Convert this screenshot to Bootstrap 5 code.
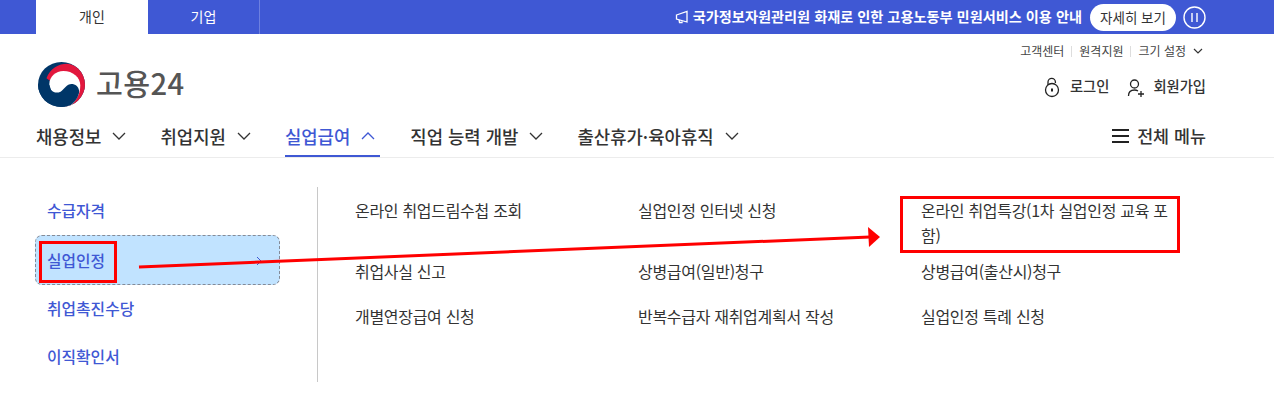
<!DOCTYPE html>
<html lang="ko">
<head>
<meta charset="utf-8">
<title>고용24</title>
<link href="https://cdn.jsdelivr.net/npm/bootstrap@5.3.0/dist/css/bootstrap.min.css" rel="stylesheet">
<style>
html,body{height:407px;overflow:hidden}
body{font-family:"Noto Sans CJK KR","Noto Sans",sans-serif;color:#333;background:#fff;position:relative}
a{color:inherit;text-decoration:none}
.topbar{height:34px;background:#3f58d4;color:#fff}
.toptab{height:34px;font-size:14px;line-height:32px;text-align:center;width:112px}
.tab-on{background:#fff;color:#333;margin-left:36px}
.tab-off{border-right:1px solid #6d80e0}
.notice{font-size:14.2px;font-weight:700;padding-right:68px;height:34px}
.detail-btn{background:#fff;color:#333;border-radius:14px;height:27px;line-height:26px;font-size:13.5px;width:86px;text-align:center;font-weight:400}
.pause-btn{width:23px;height:23px;margin-left:3px}
.headbox{height:124px;border-bottom:1px solid #ececec;padding:0 68px 0 36px;overflow:hidden}
.util{font-size:12px;height:14px;margin-top:10px;color:#444;line-height:14px;padding-right:3px;gap:7px}
.util-sep{width:1px;height:11px;background:#ddd}
.logo-row{height:47px;margin-top:3px}
.logo-mark{margin-left:2px}
.logo-text{font-size:29.2px;font-weight:500;color:#555;line-height:40px;letter-spacing:.4px;padding-bottom:6px;margin-left:3px}
.auth{font-size:14.3px;font-weight:500;color:#333;margin-top:14px;line-height:21px}
.auth-first{margin-right:18px}
.mainnav{height:40px;font-size:17.8px;font-weight:500;color:#333;margin-top:10px}
.navitem{height:40px;line-height:36px}
.navitem.is-open{color:#3f58d4;border-bottom:3px solid #3f58d4}
.nav-chev{margin-left:11px}
.nav-next{margin-left:34px}
.nav-after-open{margin-left:30px}
.nav-all{font-size:17.4px}
.menuwrap{padding:29px 0 0 35px}
.sidecol{width:245px}
.sideitem{height:48px;font-size:15.8px;font-weight:500;color:#3f58d4;padding-left:12px;line-height:48px}
.sideitem.is-active{height:50px;background:#c1e3ff;border:1px dashed #848b98;border-radius:7px;padding-left:11px;line-height:50px}
.divider{width:1px;height:195px;background:#c8c8c8;margin-left:37px}
.subgrid{display:grid;grid-template-columns:283px 283px 250px;grid-template-rows:61px 45px 45px;margin:11px 0 0 37px;align-content:start;font-size:16px;letter-spacing:-.3px;color:#333;line-height:25px}
.mark-a{left:39px;top:241px;width:78px;height:42px}
.mark-b{left:900px;top:196px;width:280px;height:57px}
.markbox{position:absolute;border:3px solid #f00}
.arrowsvg{position:absolute;left:0;top:0;width:1274px;height:407px;pointer-events:none}
</style>
</head>
<body>
<div class="topbar d-flex">
  <a class="toptab tab-on" href="#">개인</a>
  <a class="toptab tab-off" href="#">기업</a>
  <div class="notice ms-auto d-flex align-items-center gap-1">
    <svg width="14" height="14" viewBox="0 0 14 14" fill="none" stroke="#fff" stroke-width="1.300"><path d="M1.500 5L12 1.500v10.500L1.500 9zM4 9.500L4.500 12.500h2.500V10.800"/></svg>
    <span class="me-1">국가정보자원관리원 화재로 인한 고용노동부 민원서비스 이용 안내</span>
    <a class="detail-btn" href="#">자세히 보기</a>
    <svg class="pause-btn" viewBox="0 0 23 23" fill="none" stroke="#fff" stroke-width="1.400"><circle cx="11.500" cy="11.500" r="10.500"/><path d="M9 7v9M14 7v9"/></svg>
  </div>
</div>
<header class="headbox">
  <div class="util d-flex justify-content-end align-items-center">
    <a href="#">고객센터</a><span class="util-sep"></span><a href="#">원격지원</a><span class="util-sep"></span>
    <a href="#">크기 설정</a>
    <svg width="10" height="7" viewBox="0 0 10 7" fill="none" stroke="#333" stroke-width="1.200"><path d="M1 1l4 4 4-4"/></svg>
  </div>
  <div class="logo-row d-flex justify-content-between">
    <a class="d-flex align-items-center gap-2" href="#">
      <svg width="47" height="45" viewBox="0 0 100 100" class="logo-mark" preserveAspectRatio="none">
        <defs><clipPath id="disc"><circle cx="50" cy="50" r="50"/></clipPath></defs>
        <g clip-path="url(#disc)">
          <rect width="100" height="100" fill="#003668"/>
          <path d="M18 36C26 14 44 4 62 4C86 6 102 28 101 52C100 72 88 90 68 100L60 101L50 60z" fill="#e2173d"/>
          <path d="M24 50C24 32 38 20 54 20C74 20 90 34 90 52C90 72 80 88 68 98L60 101L30 70z" fill="#fff"/>
          <path d="M24 50C24 64 36 72 48 66C56 60 62 47 74 49C84 51 89 60 87 70C84 82 76 92 64 100L50 101L0 101V50z" fill="#003668"/>
        </g>
      </svg>
      <span class="logo-text">고용24</span>
    </a>
    <div class="auth d-flex">
      <a class="d-flex align-items-start gap-2 auth-first" href="#">
        <svg width="18" height="23" viewBox="0 0 18 23" fill="none" stroke="#222" stroke-width="1.300"><circle cx="8" cy="15" r="6.500"/><path d="M4 10V7a3.700 3.700 0 0 1 7.400 0v1"/><path d="M8 13.500v3" stroke-width="2"/></svg>
        <span>로그인</span>
      </a>
      <a class="d-flex align-items-start gap-2" href="#">
        <svg width="18" height="23" viewBox="0 0 18 23" fill="none" stroke="#222" stroke-width="1.300"><circle cx="7.500" cy="9" r="4"/><path d="M1.500 21c0-4 2-6 6-6 1.200 0 2.500.3 3.500 1M14 16v6M11 19h6"/></svg>
        <span>회원가입</span>
      </a>
    </div>
  </div>
  <nav class="mainnav d-flex align-items-start">
    <a class="navitem d-flex" href="#">채용정보<svg width="14" height="36" viewBox="0 0 14 36" fill="none" stroke="#333" stroke-width="1.300" class="nav-chev"><path d="M1 15l6 6 6-6"/></svg></a>
    <a class="navitem d-flex nav-next" href="#">취업지원<svg width="14" height="36" viewBox="0 0 14 36" fill="none" stroke="#333" stroke-width="1.300" class="nav-chev"><path d="M1 15l6 6 6-6"/></svg></a>
    <a class="navitem is-open d-flex nav-next" href="#">실업급여<svg width="19" height="36" viewBox="0 0 19 36" fill="none" stroke="#3f58d4" stroke-width="1.300" class="nav-chev"><path d="M1 21l6-6 6 6"/></svg></a>
    <a class="navitem d-flex nav-after-open" href="#">직업 능력 개발<svg width="14" height="36" viewBox="0 0 14 36" fill="none" stroke="#333" stroke-width="1.300" class="nav-chev"><path d="M1 15l6 6 6-6"/></svg></a>
    <a class="navitem d-flex nav-next" href="#">출산휴가·육아휴직<svg width="14" height="36" viewBox="0 0 14 36" fill="none" stroke="#333" stroke-width="1.300" class="nav-chev"><path d="M1 15l6 6 6-6"/></svg></a>
    <a class="navitem nav-all d-flex gap-2 ms-auto" href="#"><svg width="17" height="36" viewBox="0 0 17 36" fill="none" stroke="#222" stroke-width="2"><path d="M0 12h17M0 18h17M0 24h17"/></svg>전체 메뉴</a>
  </nav>
</header>
<section class="menuwrap d-flex">
  <div class="sidecol">
    <a class="sideitem d-block" href="#">수급자격</a>
    <a class="sideitem is-active d-flex justify-content-between" href="#"><span>실업인정</span><svg width="8" height="48" viewBox="0 0 8 48" fill="none" stroke="#3f58d4" stroke-width="1" class="me-3"><path d="M2 21l4 4-4 4"/></svg></a>
    <a class="sideitem d-block" href="#">취업촉진수당</a>
    <a class="sideitem d-block" href="#">이직확인서</a>
  </div>
  <div class="divider"></div>
  <div class="subgrid">
    <a href="#">온라인 취업드림수첩 조회</a>
    <a href="#">실업인정 인터넷 신청</a>
    <a href="#">온라인 취업특강(1차 실업인정 교육 포함)</a>
    <a href="#">취업사실 신고</a>
    <a href="#">상병급여(일반)청구</a>
    <a href="#">상병급여(출산시)청구</a>
    <a href="#">개별연장급여 신청</a>
    <a href="#">반복수급자 재취업계획서 작성</a>
    <a href="#">실업인정 특례 신청</a>
  </div>
</section>
<div class="markbox mark-a"></div>
<div class="markbox mark-b"></div>
<svg class="arrowsvg" viewBox="0 0 1274 407"><path d="M139 267L870 237" stroke="#f00" stroke-width="3" fill="none"/><path d="M868 227L880 237L869 247z" fill="#f00"/></svg>
<script src="https://cdn.jsdelivr.net/npm/bootstrap@5.3.0/dist/js/bootstrap.bundle.min.js"></script>
</body>
</html>
